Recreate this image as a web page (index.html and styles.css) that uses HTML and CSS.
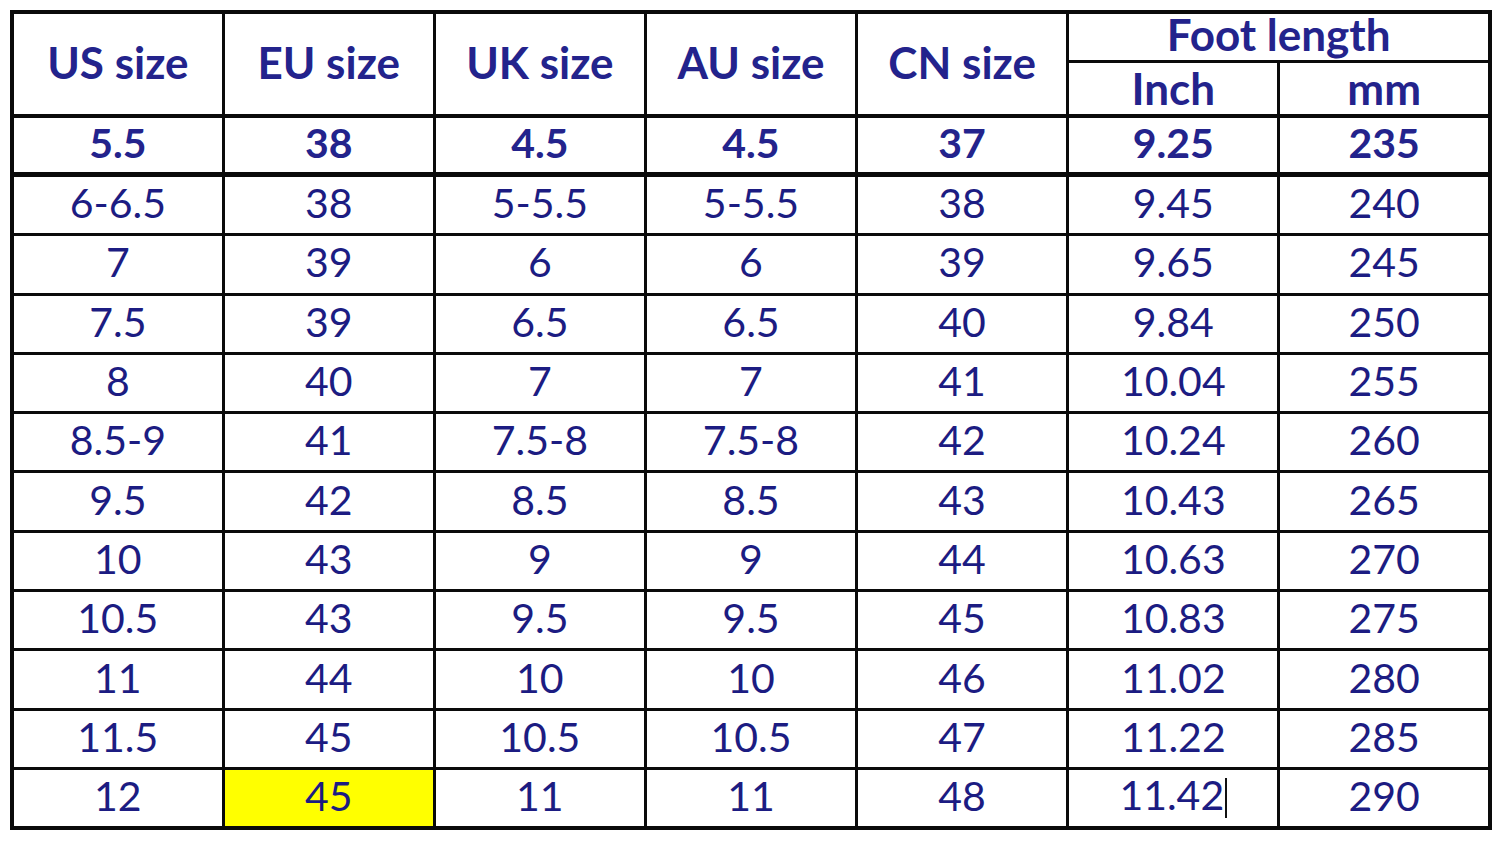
FILE: index.html
```html
<!DOCTYPE html>
<html>
<head>
<meta charset="utf-8">
<link rel="stylesheet" href="styles.css">
</head>
<body>
<table class="chart">
  <colgroup>
    <col class="c"><col class="c"><col class="c"><col class="c"><col class="c"><col class="c"><col class="c">
  </colgroup>
  <thead>
    <tr class="h1">
      <th rowspan="2" class="hd">US size</th>
      <th rowspan="2" class="hd">EU size</th>
      <th rowspan="2" class="hd">UK size</th>
      <th rowspan="2" class="hd">AU size</th>
      <th rowspan="2" class="hd">CN size</th>
      <th colspan="2" class="hd sub top">Foot length</th>
    </tr>
    <tr class="h2">
      <th class="hd sub">Inch</th>
      <th class="hd sub">mm</th>
    </tr>
  </thead>
  <tbody>
    <tr class="bold"><td>5.5</td><td>38</td><td>4.5</td><td>4.5</td><td>37</td><td>9.25</td><td>235</td></tr>
    <tr><td>6-6.5</td><td>38</td><td>5-5.5</td><td>5-5.5</td><td>38</td><td>9.45</td><td>240</td></tr>
    <tr><td>7</td><td>39</td><td>6</td><td>6</td><td>39</td><td>9.65</td><td>245</td></tr>
    <tr><td>7.5</td><td>39</td><td>6.5</td><td>6.5</td><td>40</td><td>9.84</td><td>250</td></tr>
    <tr><td>8</td><td>40</td><td>7</td><td>7</td><td>41</td><td>10.04</td><td>255</td></tr>
    <tr><td>8.5-9</td><td>41</td><td>7.5-8</td><td>7.5-8</td><td>42</td><td>10.24</td><td>260</td></tr>
    <tr><td>9.5</td><td>42</td><td>8.5</td><td>8.5</td><td>43</td><td>10.43</td><td>265</td></tr>
    <tr><td>10</td><td>43</td><td>9</td><td>9</td><td>44</td><td>10.63</td><td>270</td></tr>
    <tr><td>10.5</td><td>43</td><td>9.5</td><td>9.5</td><td>45</td><td>10.83</td><td>275</td></tr>
    <tr><td>11</td><td>44</td><td>10</td><td>10</td><td>46</td><td>11.02</td><td>280</td></tr>
    <tr><td>11.5</td><td>45</td><td>10.5</td><td>10.5</td><td>47</td><td>11.22</td><td>285</td></tr>
    <tr><td>12</td><td class="hl">45</td><td>11</td><td>11</td><td>48</td><td>11.42<span class="caret"></span></td><td>290</td></tr>
  </tbody>
</table>
</body>
</html>
```
FILE: styles.css
```css
html, body {
  margin: 0;
  padding: 0;
  background: #ffffff;
}
body {
  padding: 10px 0 0 10px;
}
.chart {
  border-collapse: collapse;
  table-layout: fixed;
  width: 1482px;
  border: 4px solid #0a0a0a;
  font-family: Lato, "Open Sans", sans-serif;
  color: #1c1c82;
}
.c { width: 211px; }
.chart th, .chart td {
  border: 3px solid #0a0a0a;
  text-align: center;
  vertical-align: middle;
  padding: 0 0 5px 0;
  font-size: 41px;
  line-height: 1;
}
.chart td {
  height: 51.3px;
  font-weight: 400;
}
.chart th {
  font-weight: 700;
  color: #23238c;
  line-height: 38px;
}
.chart .hd { font-size: 44px; }
.chart th[rowspan] { padding-bottom: 4px; }
.chart .h1 .top { height: 40px; padding-bottom: 6px; }
.chart .h2 th { height: 49px; padding-bottom: 2px; }
.chart thead tr:last-child th,
.chart thead th[rowspan] {
  border-bottom-width: 4px;
}
.chart .bold td {
  height: 49px;
  font-weight: 700;
  color: #23238c;
  border-bottom-width: 5px;
}
.hl { background: #ffff00; }
.caret {
  display: inline-block;
  width: 0;
  height: 40px;
  border-left: 2px solid #111;
  vertical-align: -8px;
  margin-left: 1px;
}
```
